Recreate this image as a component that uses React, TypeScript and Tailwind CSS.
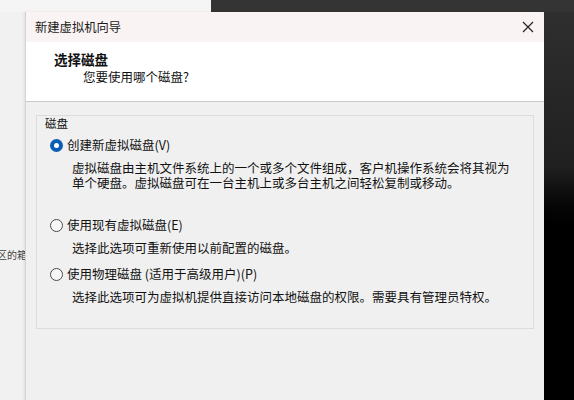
import React from 'react';

/**
 * New VM wizard – disk selection step
 */

const font = { fontFamily: '"Noto Sans CJK SC", "Noto Sans", sans-serif' };

interface OptionProps {
  label: string;
  checked?: boolean;
  lines: string[];
}

const Radio: React.FC<{ checked?: boolean }> = ({ checked }) =>
  checked ? (
    <span className="flex h-[13px] w-[13px] shrink-0 items-center justify-center rounded-full bg-[#0a5fb4]">
      <span className="h-[5px] w-[5px] rounded-full bg-white" />
    </span>
  ) : (
    <span className="h-[13px] w-[13px] shrink-0 rounded-full border border-[#4a4a4a] bg-[#f7f7f7]" />
  );

const Option: React.FC<OptionProps> = ({ label, checked, lines }) => (
  <div className="flex flex-col">
    <div className="flex h-[18px] items-center gap-[4px] pl-[13px]">
      <Radio checked={checked} />
      <span className="text-[12.5px] leading-[18px]">{label}</span>
    </div>
    <div className="mt-[6px] pl-[35px]">
      {lines.map((l) => (
        <p key={l} className="text-[12.5px] leading-[15px] whitespace-nowrap">
          {l}
        </p>
      ))}
    </div>
  </div>
);

export default function App() {
  return (
    <div className="relative h-[400px] w-[574px] overflow-hidden bg-[#f3f3f3] text-[#111]" style={font}>
      {/* desktop behind the dialog */}
      <div className="flex h-full w-full flex-col">
        <div className="flex h-[12px]">
          <div className="w-[211px] bg-[#f5f5f5]" />
          <div className="flex-1 bg-[#343434]" />
        </div>
        <div className="flex flex-1">
          <div className="flex w-[25px] flex-col overflow-hidden bg-[#f1f1f1] pt-[237px]">
            <span className="-ml-[3px] text-[10px] leading-[12px] whitespace-nowrap text-[#444]">区的箱</span>
          </div>
          <div className="flex-1" />
          <div className="w-[30px] bg-gradient-to-b from-[#2f2f2f] via-[#202020] via-40% to-[#000] to-60%" />
        </div>
      </div>

      {/* dialog window */}
      <div className="absolute left-[25px] top-[12px] flex h-[392px] w-[519px] flex-col overflow-hidden rounded-tr-[8px] border-l border-[#d4d4d4] bg-[#f0f0f0] shadow-[-1px_0_3px_rgba(0,0,0,0.08)]">
        {/* title bar */}
        <div className="flex h-[30px] items-center justify-between bg-[#f9f4f3] pl-[9px] pr-[10px]">
          <span className="text-[12.3px] text-[#1a1a1a]">新建虚拟机向导</span>
          <svg width="12" height="12" viewBox="0 0 12 12" className="text-[#222]">
            <path d="M1 1L11 11M11 1L1 11" stroke="currentColor" strokeWidth="1.2" />
          </svg>
        </div>

        {/* header */}
        <div className="flex h-[60px] flex-col border-b border-[#c9c9c9] bg-white pl-[28px] pt-[7px]">
          <span className="text-[13.5px] font-bold leading-[20px]">选择磁盘</span>
          <span className="pl-[29px] text-[12.5px] leading-[16px]">您要使用哪个磁盘?</span>
        </div>

        {/* body */}
        <div className="flex flex-1 flex-col px-[10px] pt-[13px]">
          <div className="flex h-[214px] flex-col border border-[#dcdcdc]">
            <span className="pl-[8px] text-[11.5px] leading-[14px]">磁盘</span>
            <div className="mt-[6px] flex flex-col">
              <Option
                checked
                label="创建新虚拟磁盘(V)"
                lines={[
                  '虚拟磁盘由主机文件系统上的一个或多个文件组成，客户机操作系统会将其视为',
                  '单个硬盘。虚拟磁盘可在一台主机上或多台主机之间轻松复制或移动。',
                ]}
              />
              <div className="mt-[26px] flex flex-col gap-[10px]">
                <Option label="使用现有虚拟磁盘(E)" lines={['选择此选项可重新使用以前配置的磁盘。']} />
                <Option
                  label="使用物理磁盘 (适用于高级用户)(P)"
                  lines={['选择此选项可为虚拟机提供直接访问本地磁盘的权限。需要具有管理员特权。']}
                />
              </div>
            </div>
          </div>
        </div>
      </div>
    </div>
  );
}
